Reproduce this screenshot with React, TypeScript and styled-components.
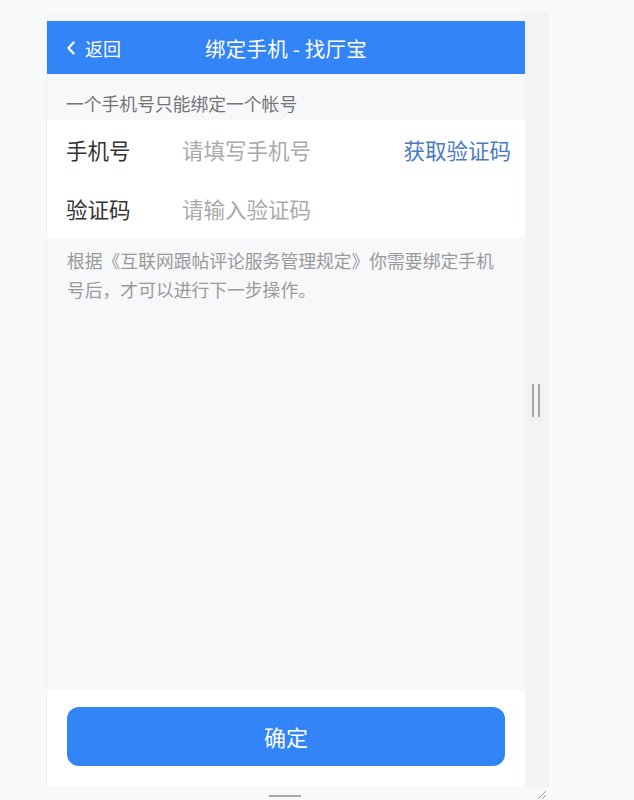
import React, { useState } from 'react';
import styled, { createGlobalStyle } from 'styled-components';

const GlobalStyle = createGlobalStyle`
    html, body {
        margin: 0;
        padding: 0;
        background: #f8f9fa;
        font-family: "Noto Sans CJK SC", "Noto Sans", "Liberation Sans", sans-serif;
    }
    * {
        box-sizing: border-box;
    }
`;

const App: React.FC = () => {
    const [phone, setPhone] = useState('');
    const [code, setCode] = useState('');

    return (
        <>
            <GlobalStyle />
            <Stage>
                <Device>
                    <Screen>
                        <Header>
                            <BackButton type="button">
                                <svg width="10" height="14" viewBox="0 0 10 14">
                                    <polyline points="7.5,1.5 2.5,7 7.5,12.5" fill="none" stroke="#fff" strokeWidth="2.2" strokeLinecap="round" strokeLinejoin="round" />
                                </svg>
                                <span>返回</span>
                            </BackButton>
                            <Title>绑定手机 - 找厅宝</Title>
                        </Header>

                        <Notice>一个手机号只能绑定一个帐号</Notice>

                        <Form>
                            <FieldRow>
                                <Label>手机号</Label>
                                <Input
                                    placeholder="请填写手机号"
                                    value={phone}
                                    onChange={e => setPhone(e.target.value)}
                                />
                                <CodeLink type="button">获取验证码</CodeLink>
                            </FieldRow>
                            <FieldRow>
                                <Label>验证码</Label>
                                <Input
                                    placeholder="请输入验证码"
                                    value={code}
                                    onChange={e => setCode(e.target.value)}
                                />
                            </FieldRow>
                        </Form>

                        <Hint>根据《互联网跟帖评论服务管理规定》你需要绑定手机号后，才可以进行下一步操作。</Hint>

                        <Footer>
                            <SubmitButton type="button">确定</SubmitButton>
                        </Footer>
                    </Screen>
                    <BottomHandle>
                        <span />
                    </BottomHandle>
                </Device>
                <SideHandle>
                    <Grip />
                    <Corner>
                        <svg width="12" height="12" viewBox="0 0 12 12">
                            <line x1="3" y1="11" x2="11" y2="3" stroke="#999" strokeWidth="1" />
                            <line x1="7" y1="11" x2="11" y2="7" stroke="#999" strokeWidth="1" />
                        </svg>
                    </Corner>
                </SideHandle>
            </Stage>
        </>
    );
}

const Stage = styled.div`
    display: flex;
    padding: 13px 0 0 47px;
    height: 800px;
    overflow: hidden;
`;

const Device = styled.div`
    display: flex;
    flex-direction: column;
    width: 478px;
    padding-top: 8px;
    background: linear-gradient(#f5f6f8, #f5f6f8) top / 100% 8px no-repeat;
`;

const Screen = styled.div`
    display: flex;
    flex-direction: column;
    height: 765px;
    background: #f7f8fa;
    box-shadow: -1px 0 0 #eceef0;
`;

const Header = styled.div`
    position: relative;
    display: flex;
    align-items: center;
    justify-content: center;
    height: 53px;
    flex-shrink: 0;
    background: #3384f6;
    color: #fff;
`;

const BackButton = styled.button`
    position: absolute;
    left: 19px;
    top: 0;
    bottom: 0;
    display: flex;
    align-items: center;
    gap: 9px;
    padding: 0;
    border: none;
    background: none;
    color: #fff;
    font-family: inherit;
    font-size: 18px;
    cursor: pointer;
`;

const Title = styled.div`
    font-size: 20.5px;
    letter-spacing: 0.2px;
`;

const Notice = styled.div`
    height: 46px;
    padding: 17px 0 0 19px;
    font-size: 17.8px;
    line-height: 24px;
    color: #747474;
`;

const Form = styled.div`
    background: #fff;
    padding: 0 14px 0 19px;
`;

const FieldRow = styled.div`
    display: flex;
    align-items: center;
    height: 59px;
`;

const Label = styled.div`
    width: 116px;
    font-size: 21.5px;
    color: #333;
`;

const Input = styled.input`
    flex: 1;
    min-width: 0;
    border: none;
    outline: none;
    padding: 0;
    background: transparent;
    font-family: inherit;
    font-size: 21.5px;
    color: #333;
    &::placeholder {
        color: #aaa;
    }
`;

const CodeLink = styled.button`
    border: none;
    background: none;
    padding: 0;
    font-family: inherit;
    font-size: 21.5px;
    color: #4a7bc4;
    cursor: pointer;
`;

const Hint = styled.div`
    flex: 1;
    padding: 8px 26px 0 20px;
    font-size: 17.8px;
    line-height: 29px;
    color: #9a9a9a;
`;

const Footer = styled.div`
    height: 96px;
    padding: 17px 20px 0 20px;
    background: #fff;
`;

const SubmitButton = styled.button`
    width: 100%;
    height: 59px;
    border: none;
    border-radius: 12px;
    background: #3384f7;
    color: #fff;
    font-family: inherit;
    font-size: 22px;
    padding-bottom: 3px;
    cursor: pointer;
`;

const BottomHandle = styled.div`
    display: flex;
    justify-content: center;
    padding-top: 9px;
    span {
        display: block;
        width: 32px;
        height: 2px;
        margin-left: -2px;
        background: #a8a8a8;
    }
`;

const SideHandle = styled.div`
    position: relative;
    display: flex;
    align-items: center;
    justify-content: center;
    width: 24px;
    height: 774px;
    background: #f2f3f5;
`;

const Grip = styled.div`
    width: 8px;
    height: 33px;
    border-left: 2px solid #a6a6a6;
    border-right: 2px solid #a6a6a6;
    margin-left: -3px;
`;

const Corner = styled.div`
    position: absolute;
    right: 2px;
    bottom: -13px;
    display: flex;
`;

export default App;
